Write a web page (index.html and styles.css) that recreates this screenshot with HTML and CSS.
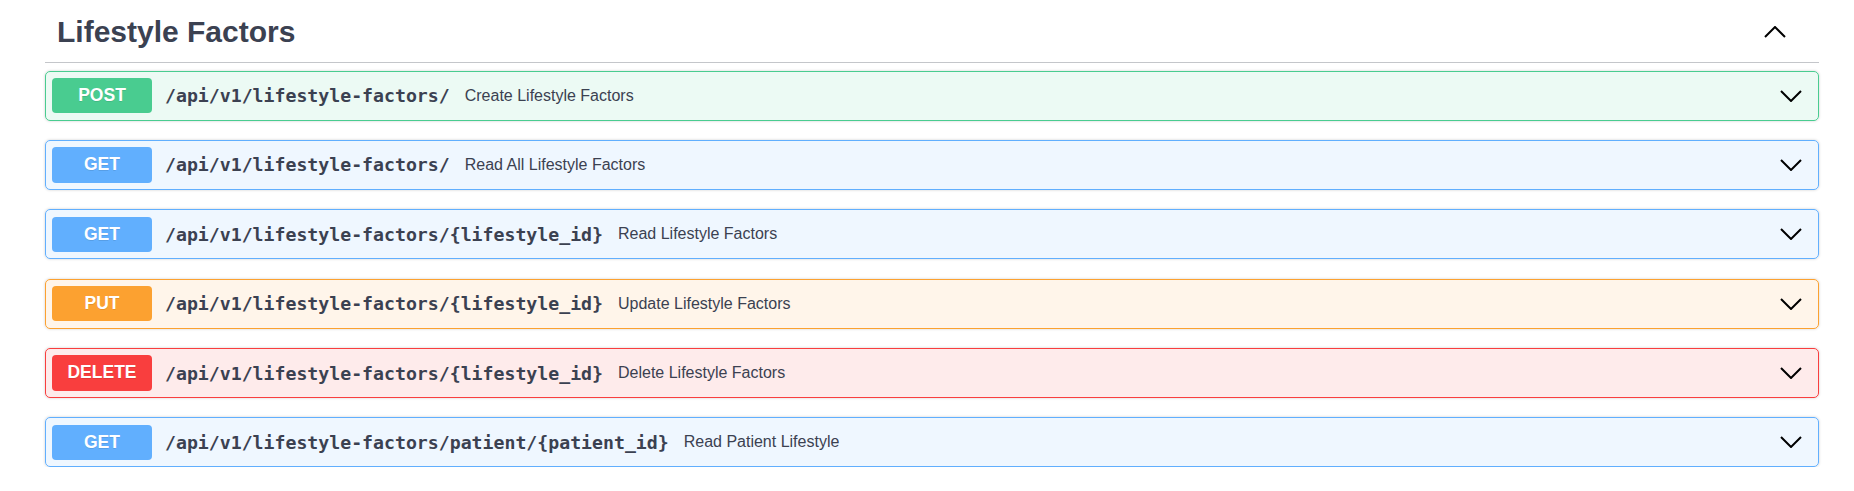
FILE: index.html
```html
<!DOCTYPE html>
<html lang="en">
<head>
<meta charset="utf-8">
<title>Lifestyle Factors</title>
<link rel="stylesheet" href="styles.css">
</head>
<body>
<div class="wrapper">
  <section class="tag-section">
    <h3 class="tag-heading">
      <span class="tag-title">Lifestyle Factors</span>
      <svg class="tag-arrow" width="22" height="12" viewBox="0 0 22 12"><polyline points="1,11 11,1 21,11" fill="none" stroke="#000" stroke-width="2"/></svg>
    </h3>
    <div class="opblocks">
      <div class="opblock post">
        <div class="summary">
          <span class="method">POST</span>
          <span class="path">/api/v1/lifestyle-factors/</span>
          <span class="desc">Create Lifestyle Factors</span>
          <svg class="arrow" width="22" height="12" viewBox="0 0 22 12"><polyline points="1,1 11,11 21,1" fill="none" stroke="#000" stroke-width="2"/></svg>
        </div>
      </div>
      <div class="opblock get">
        <div class="summary">
          <span class="method">GET</span>
          <span class="path">/api/v1/lifestyle-factors/</span>
          <span class="desc">Read All Lifestyle Factors</span>
          <svg class="arrow" width="22" height="12" viewBox="0 0 22 12"><polyline points="1,1 11,11 21,1" fill="none" stroke="#000" stroke-width="2"/></svg>
        </div>
      </div>
      <div class="opblock get">
        <div class="summary">
          <span class="method">GET</span>
          <span class="path">/api/v1/lifestyle-factors/{lifestyle_id}</span>
          <span class="desc">Read Lifestyle Factors</span>
          <svg class="arrow" width="22" height="12" viewBox="0 0 22 12"><polyline points="1,1 11,11 21,1" fill="none" stroke="#000" stroke-width="2"/></svg>
        </div>
      </div>
      <div class="opblock put">
        <div class="summary">
          <span class="method">PUT</span>
          <span class="path">/api/v1/lifestyle-factors/{lifestyle_id}</span>
          <span class="desc">Update Lifestyle Factors</span>
          <svg class="arrow" width="22" height="12" viewBox="0 0 22 12"><polyline points="1,1 11,11 21,1" fill="none" stroke="#000" stroke-width="2"/></svg>
        </div>
      </div>
      <div class="opblock delete">
        <div class="summary">
          <span class="method">DELETE</span>
          <span class="path">/api/v1/lifestyle-factors/{lifestyle_id}</span>
          <span class="desc">Delete Lifestyle Factors</span>
          <svg class="arrow" width="22" height="12" viewBox="0 0 22 12"><polyline points="1,1 11,11 21,1" fill="none" stroke="#000" stroke-width="2"/></svg>
        </div>
      </div>
      <div class="opblock get">
        <div class="summary">
          <span class="method">GET</span>
          <span class="path">/api/v1/lifestyle-factors/patient/{patient_id}</span>
          <span class="desc">Read Patient Lifestyle</span>
          <svg class="arrow" width="22" height="12" viewBox="0 0 22 12"><polyline points="1,1 11,11 21,1" fill="none" stroke="#000" stroke-width="2"/></svg>
        </div>
      </div>
    </div>
  </section>
</div>
</body>
</html>
```

FILE: styles.css
```css
html, body {
  margin: 0;
  padding: 0;
  background: #fff;
}

body {
  font-family: "Liberation Sans", Arial, sans-serif;
  color: #3b4151;
}

.wrapper {
  padding: 0 35px 0 45px;
}

.tag-heading {
  display: flex;
  align-items: center;
  margin: 0 0 7.5px;
  padding: 14.5px 33px 13px 12px;
  border-bottom: 1px solid rgba(59, 65, 81, 0.3);
  font-size: 30px;
  font-weight: 700;
  line-height: 34.5px;
  color: #3b4151;
}

.tag-title {
  flex: 1 1 auto;
}

.tag-arrow {
  display: block;
  flex: none;
}

.opblocks {
  display: flex;
  flex-direction: column;
  gap: 19.4px;
}

.opblock {
  border: 1px solid #000;
  border-radius: 5px;
  box-shadow: 0 0 3px rgba(0, 0, 0, 0.19);
}

.summary {
  display: flex;
  align-items: center;
  padding: 6.25px 16px 6.25px 6px;
}

.method {
  flex: none;
  width: 100px;
  height: 35.5px;
  line-height: 35.5px;
  text-align: center;
  border-radius: 4px;
  color: #fff;
  font-size: 17.5px;
  font-weight: 700;
  text-shadow: 0 1px 0 rgba(0, 0, 0, 0.1);
}

.path {
  flex: none;
  margin-left: 13px;
  font-family: "DejaVu Sans Mono", "Liberation Mono", monospace;
  font-size: 18.2px;
  font-weight: 700;
  color: #3b4151;
}

.desc {
  flex: 1 1 auto;
  margin-left: 15px;
  font-size: 16px;
  color: #3b4151;
}

.arrow {
  display: block;
  flex: none;
}

.post {
  border-color: #49cc90;
  background: rgba(73, 204, 144, 0.1);
}
.post .method { background: #49cc90; }

.get {
  border-color: #61affe;
  background: rgba(97, 175, 254, 0.1);
}
.get .method { background: #61affe; }

.put {
  border-color: #fca130;
  background: rgba(252, 161, 48, 0.1);
}
.put .method { background: #fca130; }

.delete {
  border-color: #f93e3e;
  background: rgba(249, 62, 62, 0.1);
}
.delete .method { background: #f93e3e; }
```
